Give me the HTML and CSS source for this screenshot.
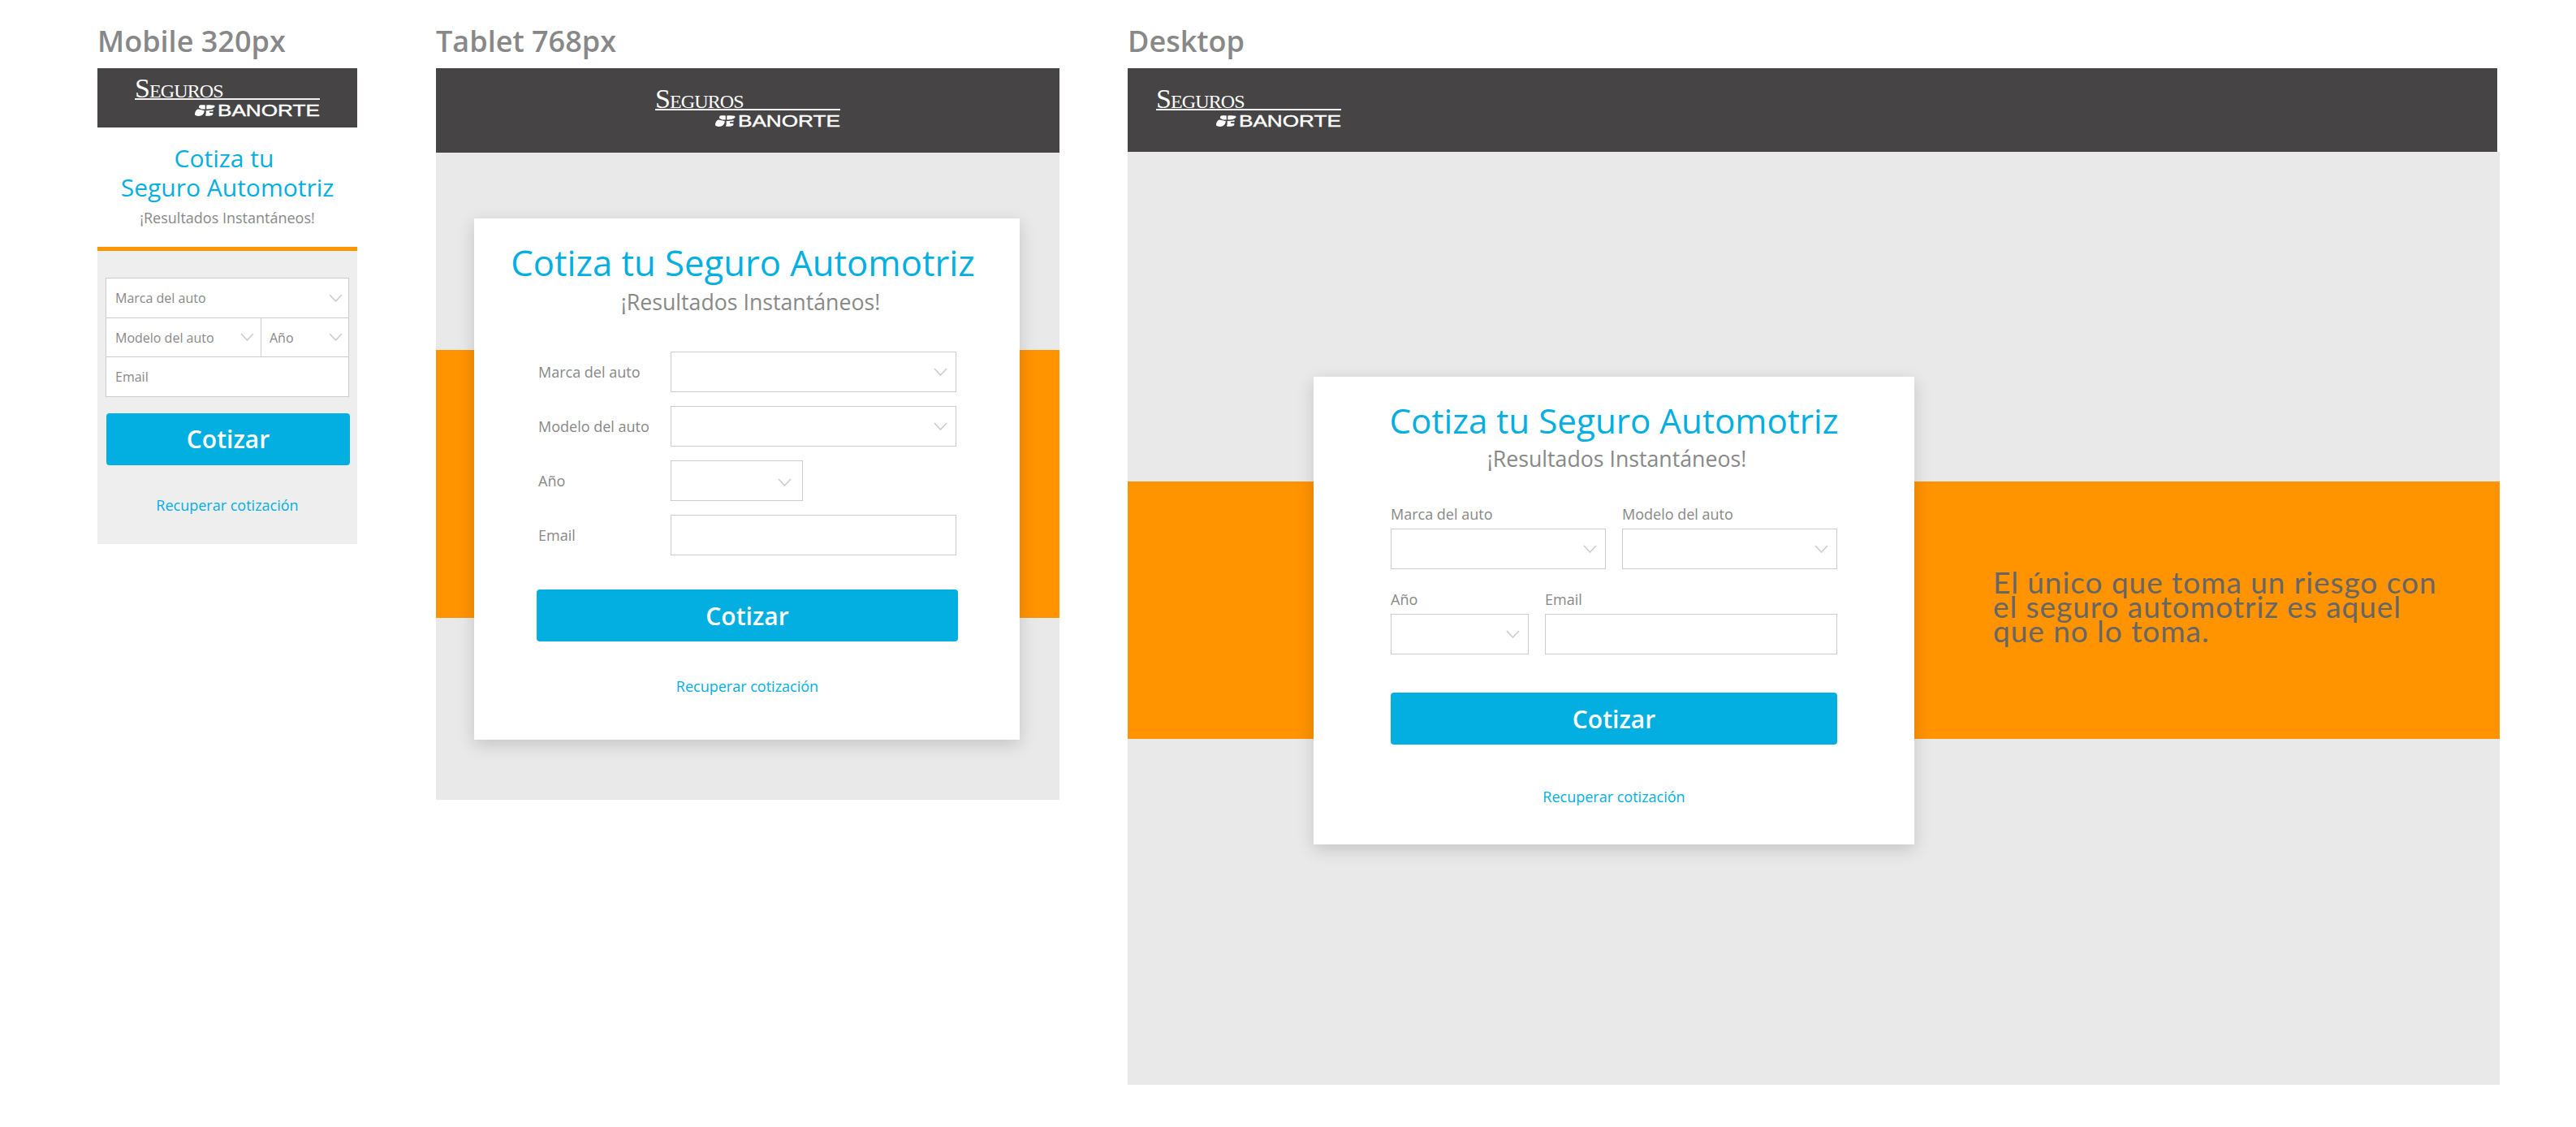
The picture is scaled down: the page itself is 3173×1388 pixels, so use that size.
FILE: index.html
```html
<!DOCTYPE html>
<html lang="es">
<head>
  <meta charset="UTF-8">
  <title>Seguros Banorte - Cotiza tu Seguro Automotriz</title>
  <link rel="stylesheet" href="styles.css">
</head>
<body>

  <svg class="sprites" width="0" height="0" aria-hidden="true">
    <symbol id="marca-banorte" viewBox="0.400 0 22.400 14" preserveAspectRatio="none">
      <path d="M6 0.500C8 0 10.500 0 11.800 0.500V5.500C9.500 5.800 7 5.400 5 3.800C4.600 2.400 5 1 6 0.500Z"/>
      <path d="M13.200 0.500C15 0 19 0 21.500 0.700C22.500 1.200 22.700 2.200 22 3C20.500 4.800 17 5.600 13.200 5.500Z"/>
      <path d="M3.500 5.600C6 6 9 6.800 11 7.200C11 9.500 9.500 12.500 7 13.600C4 14.300 1.500 13.600 0.500 12.500C0 10 1.500 7 3.500 5.600Z"/>
      <path d="M12.500 7.200C15 7 18.500 6.500 20.600 5.900V8.200H16.500V10H20.400V12.300C18.500 13.800 14.500 14.200 12 13.600C12.800 11.500 12.900 9.500 12.500 7.200Z"/>
    </symbol>
  </svg>

  <div class="boards">

    <!-- Mobile -->
    <section class="board board-mobile">
      <h2 class="board-title">Mobile 320px</h2>
      <header class="top-bar top-bar-mobile">
        <div class="logo">
          <div class="logo-seguros">Seguros</div>
          <div class="logo-rule"></div>
          <div class="logo-banorte">
            <svg class="logo-mark"><use href="#marca-banorte"></use></svg>
            <span class="logo-name">BANORTE</span>
          </div>
        </div>
      </header>
      <div class="mobile-intro">
        <h1 class="form-title"><span class="linea-corta">Cotiza tu</span><br>Seguro Automotriz</h1>
        <p class="form-sub">¡Resultados Instantáneos!</p>
      </div>
      <div class="mobile-form">
        <div class="field-group">
          <div class="cell cell-select">Marca del auto</div>
          <div class="cell-row">
            <div class="cell cell-select cell-modelo">Modelo del auto</div>
            <div class="cell cell-select cell-anio">Año</div>
          </div>
          <div class="cell">Email</div>
        </div>
        <button class="btn-cotizar" type="button">Cotizar</button>
        <a class="recuperar" href="#">Recuperar cotización</a>
      </div>
    </section>

    <!-- Tablet -->
    <section class="board board-tablet">
      <h2 class="board-title">Tablet 768px</h2>
      <header class="top-bar top-bar-center">
        <div class="logo">
          <div class="logo-seguros">Seguros</div>
          <div class="logo-rule"></div>
          <div class="logo-banorte">
            <svg class="logo-mark"><use href="#marca-banorte"></use></svg>
            <span class="logo-name">BANORTE</span>
          </div>
        </div>
      </header>
      <div class="stage">
        <div class="band"></div>
        <div class="card">
          <h1 class="form-title">Cotiza tu Seguro Automotriz</h1>
          <p class="form-sub">¡Resultados Instantáneos!</p>
          <div class="tablet-form">
            <span class="form-label">Marca del auto</span>
            <div class="input input-select"></div>
            <span class="form-label">Modelo del auto</span>
            <div class="input input-select"></div>
            <span class="form-label">Año</span>
            <div class="input input-select input-anio"></div>
            <span class="form-label">Email</span>
            <div class="input"></div>
          </div>
          <button class="btn-cotizar" type="button">Cotizar</button>
          <a class="recuperar" href="#">Recuperar cotización</a>
        </div>
      </div>
    </section>

    <!-- Desktop -->
    <section class="board board-desktop">
      <h2 class="board-title">Desktop</h2>
      <header class="top-bar top-bar-left">
        <div class="logo">
          <div class="logo-seguros">Seguros</div>
          <div class="logo-rule"></div>
          <div class="logo-banorte">
            <svg class="logo-mark"><use href="#marca-banorte"></use></svg>
            <span class="logo-name">BANORTE</span>
          </div>
        </div>
      </header>
      <div class="stage">
        <div class="band">
          <p class="quote">El único que toma un riesgo con<br>el seguro automotriz es aquel<br>que no lo toma.</p>
        </div>
        <div class="card">
          <h1 class="form-title">Cotiza tu Seguro Automotriz</h1>
          <p class="form-sub">¡Resultados Instantáneos!</p>
          <div class="desktop-row desktop-row-a">
            <div class="stack">
              <span class="form-label">Marca del auto</span>
              <div class="input input-select"></div>
            </div>
            <div class="stack">
              <span class="form-label">Modelo del auto</span>
              <div class="input input-select"></div>
            </div>
          </div>
          <div class="desktop-row desktop-row-b">
            <div class="stack">
              <span class="form-label">Año</span>
              <div class="input input-select"></div>
            </div>
            <div class="stack">
              <span class="form-label">Email</span>
              <div class="input"></div>
            </div>
          </div>
          <button class="btn-cotizar" type="button">Cotizar</button>
          <a class="recuperar" href="#">Recuperar cotización</a>
        </div>
      </div>
    </section>

  </div>

</body>
</html>
```

FILE: styles.css
```css
:root {
  --azul: #03aee1;
  --naranja: #ff9300;
  --gris-barra: #464445;
  --gris-fondo: #e9e9e9;
  --gris-texto: #888888;
  --borde: #cccccc;
  --flecha: url("data:image/svg+xml,%3Csvg xmlns='http://www.w3.org/2000/svg' width='17' height='10'%3E%3Cpath d='M1 1l7.500 8 7.500-8' fill='none' stroke='%23cccccc' stroke-width='1.600'/%3E%3C/svg%3E");
}

* {
  box-sizing: border-box;
}

html, body {
  margin: 0;
  padding: 0;
  background-color: #ffffff;
}

body {
  font-family: "Open Sans", sans-serif;
  color: var(--gris-texto);
}

.sprites {
  display: block;
  height: 0;
}

.boards {
  display: flex;
  align-items: flex-start;
  padding-left: 120px;
}

.board-mobile {
  width: 320px;
}

.board-tablet {
  width: 768px;
  margin-left: 97px;
}

.board-desktop {
  width: 1690px;
  margin-left: 84px;
}

.board-title {
  height: 84px;
  margin: 0;
  padding-top: 26px;
  font-size: 36px;
  line-height: 50px;
  font-weight: 600;
  color: var(--gris-texto);
}

/* Barra superior y logo */
.top-bar {
  display: flex;
  background-color: var(--gris-barra);
  height: 104px;
  padding-top: 25px;
}

.top-bar-mobile {
  height: 73px;
  padding-top: 12px;
  justify-content: center;
}

.top-bar-center {
  justify-content: center;
}

.top-bar-left {
  width: 1687px;
  height: 103px;
  padding-left: 35px;
}

.logo {
  width: 228px;
  color: #ffffff;
}

.logo-seguros {
  height: 24px;
  font-family: "Liberation Serif", serif;
  font-variant: small-caps;
  font-size: 34px;
  line-height: 26px;
  letter-spacing: -0.9px;
}

.logo-rule {
  height: 2px;
  margin-top: 1px;
  background-color: #f2f2f2;
}

.logo-banorte {
  display: flex;
  align-items: center;
  justify-content: flex-end;
  height: 16px;
  margin-top: 5px;
}

.logo-mark {
  width: 25px;
  height: 14px;
  margin-right: 3px;
  fill: #ffffff;
}

.logo-name {
  display: block;
  width: 126px;
  font-family: "Liberation Sans", sans-serif;
  font-size: 19.500px;
  line-height: 16px;
  white-space: nowrap;
  -webkit-text-stroke: 0.4px #ffffff;
  transform: scaleX(1.340);
  transform-origin: left center;
}

/* Textos del formulario */
.form-title {
  margin: 0;
  font-weight: 400;
  text-align: center;
  color: var(--azul);
}

.form-sub {
  margin: 0;
  text-align: center;
  color: var(--gris-texto);
}

.form-label {
  font-size: 18px;
  color: var(--gris-texto);
}

.btn-cotizar {
  display: block;
  height: 64px;
  padding: 0;
  border: none;
  border-radius: 4px;
  background-color: var(--azul);
  color: #ffffff;
  font-family: "Open Sans", sans-serif;
  font-size: 30px;
  font-weight: 600;
  text-align: center;
}

.recuperar {
  display: block;
  font-size: 18px;
  line-height: 24px;
  text-align: center;
  color: var(--azul);
  text-decoration: none;
}

/* Mobile */
.mobile-intro {
  height: 147px;
  padding-top: 20px;
}

.mobile-intro .form-title {
  font-size: 30px;
  line-height: 36px;
}

.linea-corta {
  display: inline-block;
  margin-right: 8px;
}

.mobile-intro .form-sub {
  margin-top: 7px;
  font-size: 18px;
  line-height: 24px;
}

.mobile-form {
  height: 366px;
  padding: 33px 10px 0;
  border-top: 5px solid var(--naranja);
  background-color: #eeeeee;
}

.field-group {
  border: 1px solid var(--borde);
  background-color: #ffffff;
}

.cell-row {
  display: flex;
  border-top: 1px solid var(--borde);
  border-bottom: 1px solid var(--borde);
}

.cell {
  height: 47.500px;
  padding-left: 11px;
  font-size: 16px;
  line-height: 49px;
  color: var(--gris-texto);
}

.cell-select {
  background: var(--flecha) no-repeat right 7px center;
}

.cell-modelo {
  width: 191px;
  border-right: 1px solid var(--borde);
  background-position: right 8px center;
}

.cell-anio {
  flex: 1;
  padding-left: 10px;
}

.mobile-form .btn-cotizar {
  width: 300px;
  margin: 20px 0 0 1px;
}

.mobile-form .recuperar {
  margin-top: 37px;
}

/* Escenario de tablet y desktop */
.stage {
  display: grid;
  background-color: var(--gris-fondo);
}

.band, .card {
  grid-area: 1 / 1;
}

.band {
  align-self: start;
  background-color: var(--naranja);
}

.card {
  align-self: start;
  background-color: #ffffff;
  box-shadow: 0 6px 20px rgba(0, 0, 0, 0.16);
}

.input {
  height: 50px;
  border: 1px solid var(--borde);
  background-color: #ffffff;
}

.input-select {
  background: #ffffff var(--flecha) no-repeat right 10px center;
}

/* Tablet */
.board-tablet .stage {
  height: 797px;
}

.board-tablet .band {
  height: 330px;
  margin-top: 243px;
}

.board-tablet .card {
  width: 672px;
  height: 642px;
  margin: 81px 0 0 47px;
  padding: 24px 0 0 77px;
}

.card .form-title {
  font-size: 43.600px;
  line-height: 60px;
  white-space: nowrap;
}

.card .form-sub {
  font-size: 26.700px;
  line-height: 34px;
}

.board-tablet .form-title {
  margin-left: -77px;
  padding-right: 10px;
}

.board-tablet .form-sub {
  margin-left: -77px;
  padding-left: 9px;
  margin-top: 2px;
}

.tablet-form {
  display: grid;
  grid-template-columns: 165px 352px;
  row-gap: 17px;
  align-items: center;
  margin-top: 44px;
}

.tablet-form .form-label {
  padding-left: 2px;
}

.input-anio {
  width: 163px;
  background-position: right 13px top 21px;
}

.board-tablet .btn-cotizar {
  width: 519px;
  margin-top: 42px;
}

.board-tablet .recuperar {
  width: 519px;
  margin-top: 43px;
}

/* Desktop */
.board-desktop .stage {
  height: 1149px;
}

.board-desktop .band {
  display: flex;
  align-items: center;
  height: 317px;
  margin-top: 406px;
  padding: 0 0 10px 1066px;
}

.quote {
  margin: 0;
  font-family: "Lato", sans-serif;
  font-size: 37px;
  letter-spacing: 0.950px;
  line-height: 30px;
  color: #666666;
}

.board-desktop .card {
  width: 740px;
  height: 576px;
  margin: 277px 0 0 229px;
  padding: 24px 95px 0;
}

.board-desktop .form-title {
  margin: 0 -5px;
  font-size: 42.200px;
}

.board-desktop .form-sub {
  padding-left: 7px;
}

.desktop-row {
  display: grid;
  column-gap: 20px;
}

.desktop-row-a {
  grid-template-columns: 265px 265px;
  margin-top: 35px;
}

.desktop-row-b {
  grid-template-columns: 170px 360px;
  margin-top: 21px;
}

.stack .form-label {
  display: block;
  height: 34px;
  line-height: 32px;
}

.board-desktop .btn-cotizar {
  width: 550px;
  margin-top: 47px;
}

.board-desktop .recuperar {
  margin-top: 52px;
}
```
